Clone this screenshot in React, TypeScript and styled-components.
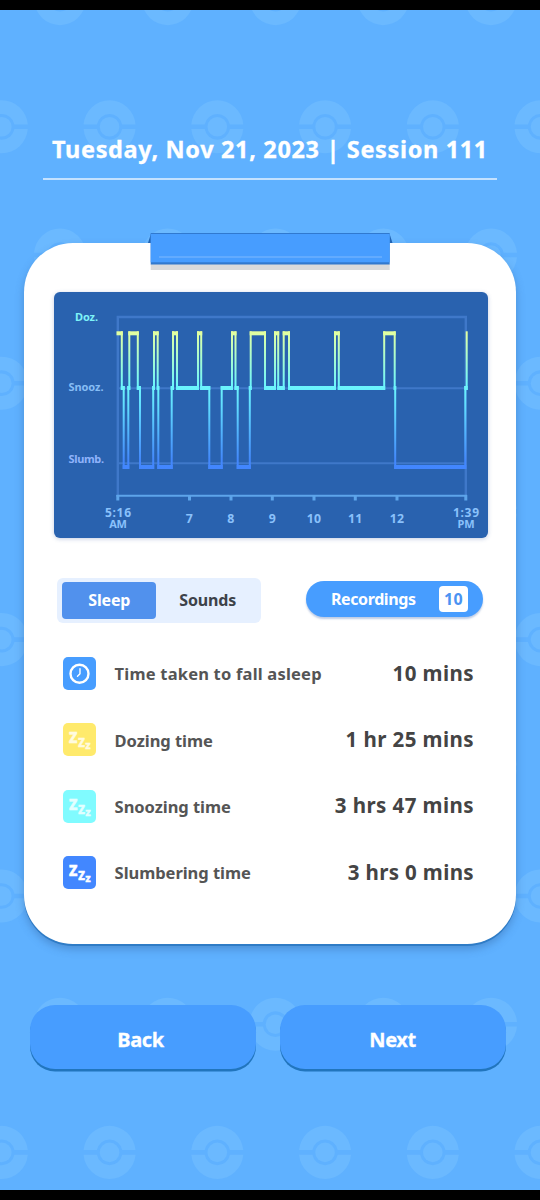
import React from "react";
import styled, { createGlobalStyle } from "styled-components";

const Global = createGlobalStyle`
  * { box-sizing: border-box; }
  body { margin: 0; background: #000; }
  button { font: inherit; border: 0; margin: 0; padding: 0; cursor: pointer; }
`;

const Screen = styled.main`
  position: relative;
  width: 540px;
  height: 1200px;
  border: solid #000;
  border-width: 10px 0;
  background: #5fb1ff;
  overflow: hidden;
  font-family: "Noto Sans", sans-serif;
  font-weight: 700;
  display: flex;
  flex-direction: column;
`;

const Backdrop = styled.svg`
  position: absolute;
  left: 0;
  top: 0;
`;

const Header = styled.header`
  position: relative;
  margin: 117px 43px 0;
  height: 53px;
  border-bottom: 2px solid #c4e2ff;
  display: flex;
  justify-content: center;
`;

const Title = styled.h1`
  margin: 0;
  font-size: 23.5px;
  line-height: 44px;
  letter-spacing: 0.65px;
  white-space: nowrap;
  color: #fff;
  -webkit-text-stroke: 0.3px #fff;
`;

const Card = styled.section`
  position: relative;
  margin: 63px 24px 0;
  height: 701px;
  padding: 48.5px 28px 0 30px;
  border-radius: 49px;
  background: #fff;
  box-shadow: 0 2px 0 #2f7cc6, 0 5px 9px rgba(50, 100, 160, 0.45);
`;

const Clip = styled.svg`
  position: absolute;
  left: 123px;
  top: -11px;
`;

const ChartPanel = styled.div`
  width: 434px;
  height: 246px;
  border-radius: 6px;
  background: #2962af;
  overflow: hidden;
  box-shadow: 0 1px 4px rgba(60, 90, 160, 0.3);
`;

const Controls = styled.div`
  margin: 40.3px 5px 0 3px;
  height: 45px;
  display: flex;
  justify-content: space-between;
  align-items: flex-start;
`;

const Tabs = styled.div`
  display: flex;
  width: 204px;
  height: 45px;
  padding: 4px 5px;
  border-radius: 6px;
  background: #e6f0ff;
`;

const Tab = styled.button<{ $active?: boolean }>`
  width: ${(p) => (p.$active ? 95 : 102)}px;
  height: 37px;
  padding-left: ${(p) => (p.$active ? 1 : 4)}px;
  border-radius: 4px;
  background: ${(p) => (p.$active ? "#5191ed" : "transparent")};
  color: ${(p) => (p.$active ? "#fff" : "#3d4249")};
  font-size: 16px;
  line-height: 35px;
  letter-spacing: -0.15px;
`;

const Recordings = styled.button`
  margin-top: 3px;
  width: 177px;
  height: 36px;
  padding: 0 15px 0 25px;
  border-radius: 18px;
  background: #479dff;
  box-shadow: 0 2px 2px rgba(70, 110, 180, 0.35);
  color: #fff;
  font-size: 16px;
  letter-spacing: -0.4px;
  display: flex;
  align-items: center;
  justify-content: space-between;
`;

const Count = styled.span`
  width: 29px;
  height: 26px;
  border-radius: 4px;
  background: #fff;
  color: #4a93f2;
  line-height: 26px;
  letter-spacing: 0.3px;
  text-align: center;
`;

const Stats = styled.div`
  margin-top: 34px;
  padding: 0 14px 0 9px;
  display: flex;
  flex-direction: column;
  gap: 33.4px;
`;

const Stat = styled.div`
  display: flex;
  align-items: center;
  height: 33px;
`;

const StatIcon = styled.svg<{ $color: string }>`
  width: 33px;
  height: 33px;
  flex: none;
  border-radius: 5px;
  background: ${(p) => p.$color};
`;

const StatLabel = styled.span<{ $spacing?: number }>`
  flex: 1;
  margin-left: 18.6px;
  margin-top: 1px;
  font-size: 16.5px;
  letter-spacing: ${(p) => p.$spacing ?? -0.05}px;
  color: #555;
`;

const StatValue = styled.span<{ $spacing?: number }>`
  font-size: 20.5px;
  letter-spacing: ${(p) => p.$spacing ?? 0.42}px;
  color: #444;
  margin-top: -1.5px;
`;

const Footer = styled.footer`
  position: relative;
  margin: 61px 34px 0 30px;
  display: flex;
  justify-content: space-between;
`;

const Action = styled.button`
  width: 226px;
  height: 64px;
  padding: 5px 5px 0 0;
  border-radius: 25px;
  background: #479dff;
  box-shadow: 0 2.5px 0 #2175bd;
  color: #fff;
  font-size: 20px;
  letter-spacing: -0.4px;
  -webkit-text-stroke: 0.3px #fff;

  & + & {
    padding-right: 1px;
  }
`;

// Chart levels, in screen units of the chart's view box.
const DOZE = 333.3;
const SNOOZE = 388;
const SLUMBER = 467;

// Each step holds a level until the given x.
const steps: [number, number][] = [
  [DOZE, 121.8], [SNOOZE, 123.7], [SLUMBER, 128.3], [SNOOZE, 129.3],
  [DOZE, 137.8], [SNOOZE, 140], [SLUMBER, 153.2], [SNOOZE, 154],
  [DOZE, 157.7], [SNOOZE, 158.3], [SLUMBER, 171.7], [SNOOZE, 173],
  [DOZE, 177], [SNOOZE, 198], [DOZE, 201.2], [SNOOZE, 209.3],
  [SLUMBER, 221.7], [SNOOZE, 232], [DOZE, 235.5], [SNOOZE, 237.7],
  [SLUMBER, 249.8], [SNOOZE, 250.7], [DOZE, 265], [SNOOZE, 275],
  [DOZE, 278.2], [SNOOZE, 283.7], [DOZE, 289], [SNOOZE, 335],
  [DOZE, 338.8], [SNOOZE, 384.2], [DOZE, 394.7], [SNOOZE, 395.2],
  [SLUMBER, 465.3], [SNOOZE, 466.7],
];

const hours: [string, number][] = [
  ["7", 189.5], ["8", 231], ["9", 272.3], ["10", 314], ["11", 355.3], ["12", 397],
];

function SleepChart() {
  let x = 117.5;
  const bars: React.ReactNode[] = [];
  steps.forEach(([y, end], i) => {
    const next = i + 1 < steps.length ? steps[i + 1][0] : DOZE;
    bars.push(
      <rect key={"h" + i} x={x - 1} y={y - 2} width={end - x + 2} height={4} />,
      <rect key={"v" + i} x={end - 1} y={Math.min(y, next) - 2} width={2} height={Math.abs(y - next) + 4} />
    );
    x = end;
  });
  return (
    <svg width="434" height="246" viewBox="54 292 434 246" fontFamily="Noto Sans, sans-serif" fontWeight="700">
      <defs>
        <linearGradient id="depth" gradientUnits="userSpaceOnUse" x1="0" x2="0" y1="331" y2="469">
          <stop offset="0" stopColor="#e6ff9c" />
          <stop offset="0.08" stopColor="#ccffb4" />
          <stop offset="0.4" stopColor="#6cf5fc" />
          <stop offset="0.55" stopColor="#60dcff" />
          <stop offset="0.93" stopColor="#4388fb" />
          <stop offset="1" stopColor="#4286ff" />
        </linearGradient>
      </defs>
      <g stroke="#3f78c9" strokeWidth="2" fill="none">
        <path d="M117.8 496V317H465.8V496" strokeWidth="2.4" />
        <path d="M119 388.3H465M119 463.3H465" />
      </g>
      <g stroke="#5da4ea" fill="none">
        <path d="M116.5 495.7H467" strokeWidth="2" />
        <path
          d={[117.8, ...hours.map((h) => h[1]), 465.8].map((t) => `M${t} 495V500.5`).join("")}
          strokeWidth="3"
        />
      </g>
      <g fill="url(#depth)">{bars}</g>
      <g fontSize="11">
        <text x="75" y="321" fill="#7df3f8" textLength="23">Doz.</text>
        <text x="68.5" y="391" fill="#86bdf5" textLength="35">Snooz.</text>
        <text x="68.5" y="463" fill="#8fb3fb" textLength="35.5">Slumb.</text>
      </g>
      <g fontSize="12.3" fill="#8ac1fb" textAnchor="middle">
        {hours.map(([label, at]) => (
          <text key={label} x={at} y="522.5" letterSpacing="0.3">{label}</text>
        ))}
        <text x="118" y="517" fontSize="12" textLength="26">5:16</text>
        <text x="118" y="528" fontSize="11" textLength="17.5">AM</text>
        <text x="466" y="517" fontSize="12" textLength="26">1:39</text>
        <text x="466" y="528" fontSize="11" textLength="17">PM</text>
      </g>
    </svg>
  );
}

function Ball({ x, y }: { x: number; y: number }) {
  return (
    <g transform={`translate(${x} ${y})`}>
      <path d="M-26 -2.3A26.1 26.6 0 0 1 26 -2.3H12.6A12.8 12.8 0 0 0 -12.6 -2.3Z" />
      <path d="M-26 2.3A26.1 26.6 0 0 0 26 2.3H12.6A12.8 12.8 0 0 1 -12.6 2.3Z" />
      <circle r="9.8" />
    </g>
  );
}

function Balls() {
  const balls: React.ReactNode[] = [];
  for (let row = 0; row < 10; row++) {
    const odd = row % 2;
    for (let col = 0; col < 6; col++) {
      balls.push(
        <Ball key={`${row}-${col}`} x={(odd ? 1.8 : 60) + col * 107.75} y={-11.4 + row * 128.2} />
      );
    }
  }
  return (
    <Backdrop width="540" height="1180" fill="#6bb9ff">
      {balls}
    </Backdrop>
  );
}

function ClockIcon() {
  return (
    <StatIcon $color="#479dff" viewBox="0 0 33 33" fill="none" stroke="#fff" strokeLinecap="round">
      <circle cx="16.5" cy="16.8" r="9" strokeWidth="2.4" />
      <path d="M17 11.7V16.8L14.5 19.3" strokeWidth="1.4" strokeLinejoin="round" />
    </StatIcon>
  );
}

function ZzzIcon({ color, ink }: { color: string; ink: string }) {
  return (
    <StatIcon
      $color={color}
      viewBox="0 0 33 33"
      fill={ink}
      stroke={ink}
      strokeWidth="0.5"
      fontFamily="Noto Sans, sans-serif"
      fontWeight="800"
    >
      <text x="6" y="19.7" fontSize="15.5" textLength="8.4" lengthAdjust="spacingAndGlyphs">Z</text>
      <text x="15.2" y="23.8" fontSize="11.5" textLength="6.6" lengthAdjust="spacingAndGlyphs">Z</text>
      <text x="22.5" y="25.8" fontSize="8.2" textLength="5" lengthAdjust="spacingAndGlyphs">Z</text>
    </StatIcon>
  );
}

export default function App() {
  return (
    <Screen>
      <Global />
      <Balls />
      <Header>
        <Title>Tuesday, Nov 21, 2023 | Session 111</Title>
      </Header>
      <Card>
        <Clip width="246" height="40" viewBox="147 232 246 40">
          <path d="M148 243L151 233.5V243ZM392.5 243L389.5 233.5V243Z" fill="#2164b4" />
          <rect x="150.7" y="264" width="239" height="6" fill="#d9dadb" />
          <rect x="150.7" y="233" width="239" height="31.5" fill="#3079cf" />
          <rect x="150.7" y="234" width="239" height="28.3" fill="#479dff" />
          <rect x="159" y="256" width="223" height="2" fill="#62abff" />
        </Clip>
        <ChartPanel>
          <SleepChart />
        </ChartPanel>
        <Controls>
          <Tabs>
            <Tab $active>Sleep</Tab>
            <Tab>Sounds</Tab>
          </Tabs>
          <Recordings>
            Recordings
            <Count>10</Count>
          </Recordings>
        </Controls>
        <Stats>
          <Stat>
            <ClockIcon />
            <StatLabel $spacing={0.2}>Time taken to fall asleep</StatLabel>
            <StatValue>10 mins</StatValue>
          </Stat>
          <Stat>
            <ZzzIcon color="#ffea6c" ink="#fffbe0" />
            <StatLabel>Dozing time</StatLabel>
            <StatValue>1 hr 25 mins</StatValue>
          </Stat>
          <Stat>
            <ZzzIcon color="#80fbff" ink="#e4ffff" />
            <StatLabel>Snoozing time</StatLabel>
            <StatValue>3 hrs 47 mins</StatValue>
          </Stat>
          <Stat>
            <ZzzIcon color="#4287ff" ink="#fff" />
            <StatLabel>Slumbering time</StatLabel>
            <StatValue $spacing={0.35}>3 hrs 0 mins</StatValue>
          </Stat>
        </Stats>
      </Card>
      <Footer>
        <Action>Back</Action>
        <Action>Next</Action>
      </Footer>
    </Screen>
  );
}
